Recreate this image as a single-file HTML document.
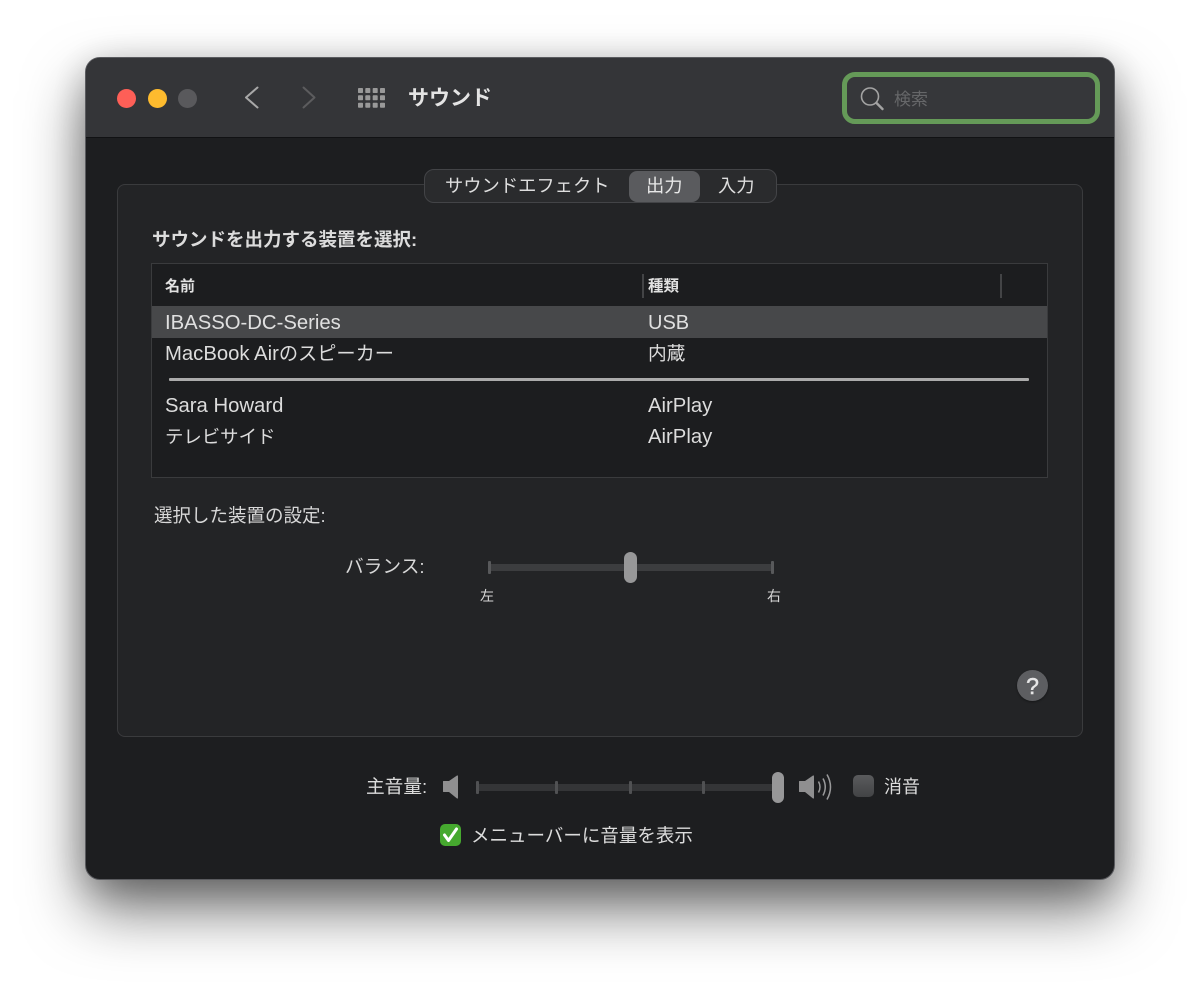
<!DOCTYPE html>
<html lang="ja"><head><meta charset="utf-8"><title>サウンド</title>
<style>
html,body{margin:0;padding:0;background:#fff;width:1200px;height:992px;overflow:hidden}
body{position:relative;font-family:"Liberation Sans","Noto Sans CJK JP",sans-serif;color:#dcdcdc}
#root{position:absolute;left:0;top:0;width:1200px;height:992px;filter:blur(.35px)}
#win{position:absolute;left:85px;top:57px;width:1030px;height:823px;box-sizing:border-box;border-radius:15px;background:#1d1e20;border:1.5px solid #5a5b5f;box-shadow:0 30px 60px rgba(0,0,0,.55),0 8px 36px rgba(0,0,0,.22)}
#bar{position:absolute;left:86px;top:58px;width:1028px;height:80px;background:#343538;border-radius:14px 14px 0 0;border-bottom:1px solid #111214;box-sizing:border-box}
.a{position:absolute}
.t{position:absolute;white-space:nowrap;line-height:24px;height:24px}
.d{position:absolute;border-radius:50%}
</style></head><body><div id="root">
<div id="win"></div><div id="bar"></div>
<div class="d" style="left:117px;top:89px;width:19px;height:19px;background:#fe5f57"></div>
<div class="d" style="left:148px;top:89px;width:19px;height:19px;background:#febb2e"></div>
<div class="d" style="left:178px;top:89px;width:19px;height:19px;background:#59595c"></div>
<svg class="a" style="left:240px;top:82px" width="80" height="32" fill="none" stroke-linecap="round" stroke-linejoin="round" stroke-width="2"><path d="M17.500 5.500 6 15.500 17.500 25.500" stroke="#a8a8a8"/><path d="M63.500 5.500 74.500 15.500 63.500 25.500" stroke="#5c5c5e"/></svg>
<svg class="a" style="left:358px;top:88px" width="28" height="20" fill="#999"><rect x="0" y="0" width="5" height="5" rx=".8"/><rect x="7.300" y="0" width="5" height="5" rx=".8"/><rect x="14.700" y="0" width="5" height="5" rx=".8"/><rect x="22" y="0" width="5" height="5" rx=".8"/><rect x="0" y="7.300" width="5" height="5" rx=".8"/><rect x="7.300" y="7.300" width="5" height="5" rx=".8"/><rect x="14.700" y="7.300" width="5" height="5" rx=".8"/><rect x="22" y="7.300" width="5" height="5" rx=".8"/><rect x="0" y="14.700" width="5" height="5" rx=".8"/><rect x="7.300" y="14.700" width="5" height="5" rx=".8"/><rect x="14.700" y="14.700" width="5" height="5" rx=".8"/><rect x="22" y="14.700" width="5" height="5" rx=".8"/></svg>
<div class="t" style="left:408px;top:87px;font-size:21px;font-weight:700;color:#e4e4e4">サウンド</div>

<div class="a" style="left:842px;top:72px;width:258px;height:52px;box-sizing:border-box;border:5px solid #659a58;border-radius:13px;background:#36373a"></div>
<svg class="a" style="left:859px;top:85px" width="26" height="26" fill="none" stroke="#a3a3a3"><circle cx="11" cy="11.500" r="8.500" stroke-width="1.600"/><path d="M17.500 18 23.500 24" stroke-width="2.400" stroke-linecap="round"/></svg>
<div class="t" style="left:894px;top:88px;font-size:17px;color:#666769">検索</div>

<div class="a" style="left:117px;top:184px;width:966px;height:553px;box-sizing:border-box;background:#232426;border:1.5px solid #3a3b3d;border-radius:8px"></div>
<div class="a" style="left:424px;top:169px;width:353px;height:34px;box-sizing:border-box;background:#2a2b2d;border:1.5px solid #434447;border-radius:10px"></div>
<div class="a" style="left:629px;top:171px;width:71px;height:31px;background:#5a5b5e;border-radius:8px"></div>
<div class="t" style="left:445px;top:174px;font-size:18.3px;color:#dedede">サウンドエフェクト</div>
<div class="t" style="left:646px;top:174px;font-size:18.3px;color:#e8e8e8">出力</div>
<div class="t" style="left:718px;top:174px;font-size:18.3px;color:#dedede">入力</div>

<div class="t" style="left:152px;top:228px;font-size:18.5px;font-weight:700;color:#dcdcdc">サウンドを出力する装置を選択:</div>

<div class="a" style="left:151px;top:263px;width:897px;height:215px;box-sizing:border-box;background:#1c1d1f;border:1.5px solid #3a3b3d"></div>
<div class="a" style="left:642px;top:274px;width:1.5px;height:24px;background:#434446"></div>
<div class="a" style="left:1000px;top:274px;width:1.5px;height:24px;background:#434446"></div>
<div class="t" style="left:165px;top:275px;font-size:15px;font-weight:700;color:#e2e2e2">名前</div>
<div class="t" style="left:648px;top:275px;font-size:15.5px;font-weight:700;color:#e2e2e2">種類</div>
<div class="a" style="left:152px;top:306px;width:895px;height:32px;background:#47484a"></div>
<div class="t" style="left:165px;top:311px;font-size:20.3px;color:#e0e0e0">IBASSO-DC-Series</div>
<div class="t" style="left:648px;top:311px;font-size:20px;color:#e0e0e0">USB</div>
<div class="t" style="left:165px;top:342px;font-size:20.3px;color:#dcdcdc">MacBook Air<span style="font-size:19.2px">のスピーカー</span></div>
<div class="t" style="left:648px;top:342px;font-size:18.7px;color:#dcdcdc">内蔵</div>
<div class="a" style="left:169px;top:378px;width:860px;height:3px;background:#ababab;border-radius:1px"></div>
<div class="t" style="left:165px;top:394px;font-size:20.3px;color:#dcdcdc">Sara Howard</div>
<div class="t" style="left:648px;top:394px;font-size:20.3px;color:#dcdcdc">AirPlay</div>
<div class="t" style="left:165px;top:425px;font-size:18.4px;color:#dcdcdc">テレビサイド</div>
<div class="t" style="left:648px;top:425px;font-size:20.3px;color:#dcdcdc">AirPlay</div>

<div class="t" style="left:154px;top:504px;font-size:18.5px;color:#d8d8d8">選択した装置の設定:</div>

<div class="t" style="left:345px;top:555px;font-size:18.7px;color:#d8d8d8">バランス:</div>
<div class="a" style="left:490px;top:564px;width:282px;height:7px;background:#3c3d3f"></div>
<div class="a" style="left:488px;top:561px;width:3px;height:13px;background:#58595b;border-radius:1px"></div>
<div class="a" style="left:771px;top:561px;width:3px;height:13px;background:#58595b;border-radius:1px"></div>
<div class="a" style="left:624px;top:552px;width:13px;height:31px;background:#979798;border-radius:6.5px"></div>
<div class="t" style="left:480px;top:584px;font-size:14px;color:#d8d8d8">左</div>
<div class="t" style="left:767px;top:584px;font-size:14px;color:#d8d8d8">右</div>

<div class="d" style="left:1017px;top:670px;width:31px;height:31px;background:#5d5e61;box-shadow:0 1px 2px rgba(0,0,0,.4)"></div>
<div class="t" style="left:1017px;top:674px;width:31px;text-align:center;font-size:23px;color:#e6e6e6;-webkit-text-stroke:.5px #e6e6e6">?</div>

<div class="t" style="left:366px;top:775px;font-size:18.7px;color:#dcdcdc">主音量:</div>
<svg class="a" style="left:442px;top:774px" width="18" height="26" fill="#8f8f90"><path d="M1.500 7h5.500L15 1.500Q16 1 16 2.500V23.500Q16 25 15 24.500L7 18H1.500Q1 18 1 17.500V7.500Q1 7 1.500 7z"/></svg>
<div class="a" style="left:478px;top:784px;width:300px;height:7px;background:#343537"></div>
<div class="a" style="left:476px;top:781px;width:3px;height:13px;background:#505153;border-radius:1px"></div>
<div class="a" style="left:555px;top:781px;width:3px;height:13px;background:#505153;border-radius:1px"></div>
<div class="a" style="left:629px;top:781px;width:3px;height:13px;background:#505153;border-radius:1px"></div>
<div class="a" style="left:702px;top:781px;width:3px;height:13px;background:#505153;border-radius:1px"></div>
<div class="a" style="left:772px;top:772px;width:12px;height:31px;background:#979798;border-radius:6px"></div>
<svg class="a" style="left:798px;top:773px" width="36" height="28" fill="none" stroke="#9a9a9b"><path d="M1.500 8h5.500L15 2.500Q16 2 16 3.500V24.500Q16 26 15 25.500L7 19H1.500Q1 19 1 18.500V8.500Q1 8 1.500 8z" fill="#8f8f90" stroke="none"/><path d="M20.500 8.500Q23.500 14 20.500 19.500" stroke-width="1.500"/><path d="M25 5.500Q29.500 14 25 22.500" stroke-width="1.500"/><path d="M29 1.500Q36 14 29 26.500" stroke-width="1.500"/></svg>
<div class="a" style="left:853px;top:775px;width:21px;height:22px;border-radius:5px;background:linear-gradient(#5a5b5d,#424345)"></div>
<div class="t" style="left:884px;top:775px;font-size:18px;color:#dcdcdc">消音</div>
<div class="a" style="left:440px;top:824px;width:21px;height:22px;border-radius:5px;background:#46a92f"></div>
<svg class="a" style="left:440px;top:824px" width="21" height="22" fill="none" stroke="#fff" stroke-width="3" stroke-linecap="round" stroke-linejoin="round"><path d="M4.500 11 8.500 16.500 16.500 5"/></svg>
<div class="t" style="left:471px;top:824px;font-size:18.500px;color:#dcdcdc">メニューバーに音量を表示</div>
</div></body></html>
